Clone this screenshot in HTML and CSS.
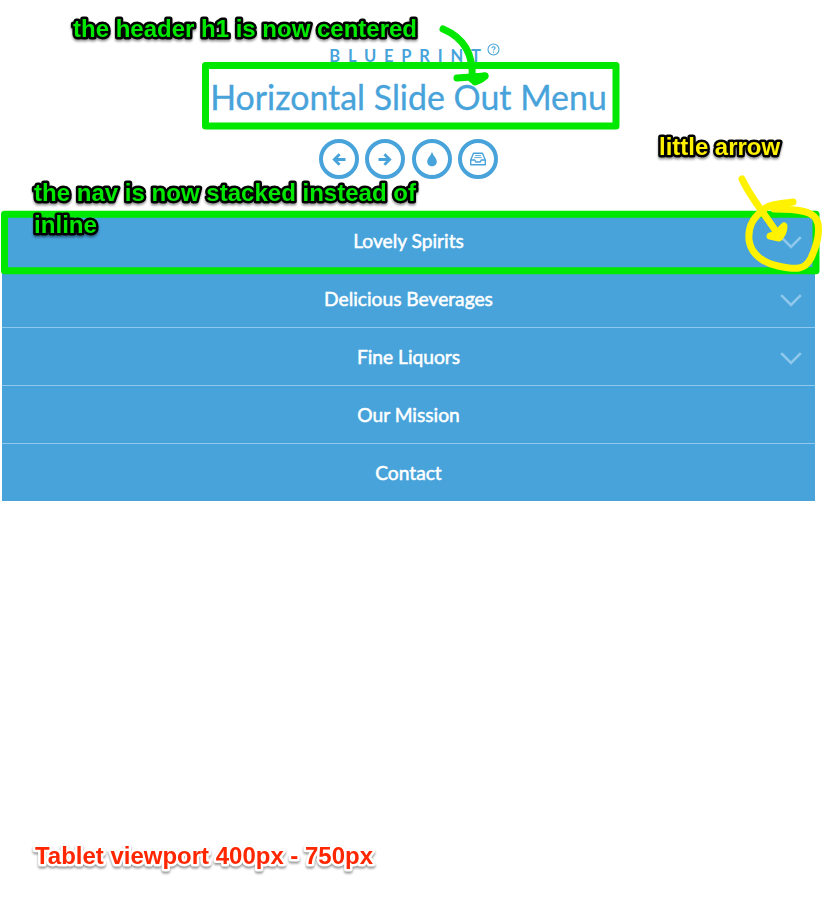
FILE: index.html
```html
<!DOCTYPE html>
<html lang="en">
<head>
<meta charset="utf-8">
<title>Horizontal Slide Out Menu</title>
<link rel="stylesheet" href="styles.css">
</head>
<body>
<div class="page">
  <header class="header">
    <div class="brand"><span class="brand-name">BLUEPRINT</span>
      <svg class="help" viewBox="0 0 13 13"><circle cx="6.5" cy="6.5" r="5.5"/><path d="M4.9 5.2C4.9 3.2 8.1 3.2 8.1 5.1C8.1 6.2 6.5 6.2 6.5 7.6M6.5 8.6V9.8"/></svg>
    </div>
    <h1>Horizontal Slide Out Menu</h1>
    <div class="tools">
      <a class="tool"><svg viewBox="0 0 16 16"><path class="arrow" d="M14.5 8.5H4M8.6 3.2L3.3 8.5L8.6 13.8"/></svg></a>
      <a class="tool"><svg viewBox="0 0 16 16"><path class="arrow" d="M1.5 8.5H12M7.4 3.2L12.7 8.5L7.4 13.8"/></svg></a>
      <a class="tool"><svg viewBox="0 0 16 16"><path class="drop" d="M8 .8C9 4.5 12.8 7.4 12.8 10.7C12.8 13.4 10.7 15.3 8 15.3S3.2 13.4 3.2 10.7C3.2 7.4 7 4.5 8 .8Z"/></svg></a>
      <a class="tool"><svg viewBox="0 0 16 16"><path class="tray" d="M.7 9.1L3.5 2.3H12.5L15.3 9.1V13.7H.7ZM.9 9H4.8L5.7 11H10.3L11.2 9H15.1"/><path class="lines" d="M5 4.6H11M4.3 6.6H11.7"/></svg></a>
    </div>
  </header>
  <nav class="menu">
    <a class="item">Lovely Spirits<svg class="chevron" viewBox="0 0 22 13"><path d="M1.2 1.2L11 11L20.8 1.2"/></svg></a>
    <a class="item">Delicious Beverages<svg class="chevron" viewBox="0 0 22 13"><path d="M1.2 1.2L11 11L20.8 1.2"/></svg></a>
    <a class="item">Fine Liquors<svg class="chevron" viewBox="0 0 22 13"><path d="M1.2 1.2L11 11L20.8 1.2"/></svg></a>
    <a class="item">Our Mission</a>
    <a class="item">Contact</a>
  </nav>
</div>
<svg class="notes" width="824" height="900" viewBox="0 0 824 900">
  <g class="pen green">
    <rect x="205.5" y="65.5" width="410.5" height="60.5"/>
    <rect x="4.5" y="214.3" width="811.5" height="56.5"/>
    <path d="M443 29C462 37 474 52 472 79M457 78L485 76"/>
    <path class="head" d="M471 78L485 76C482 80 478 81 475 82Z"/>
  </g>
  <g class="pen yellow">
    <path d="M742 179C750 197 765 214 779 236"/>
    <path class="head" d="M770 236L776 234L784 226C784 231 782 235 779 238Z"/>
    <path d="M793 202C779 204 769 204 763 210C752 219 748 227 749 240C751 254 763 263 778 266C796 270 805 270 811 258C816 247 820 234 818 224C816 211 799 209 774 209"/>
  </g>
  <g class="label lime">
    <text x="73" y="37" textLength="344" lengthAdjust="spacingAndGlyphs">the header h1 is now centered</text>
    <text x="34" y="201" textLength="382" lengthAdjust="spacingAndGlyphs">the nav is now stacked instead of</text>
    <text x="34" y="233" textLength="63" lengthAdjust="spacingAndGlyphs">inline</text>
  </g>
  <g class="label lemon"><text x="659" y="155" textLength="121" lengthAdjust="spacingAndGlyphs">little arrow</text></g>
  <g class="label red"><text x="35" y="864" textLength="338" lengthAdjust="spacingAndGlyphs">Tablet viewport 400px - 750px</text></g>
</svg>
</body>
</html>
```
FILE: styles.css
```css
* { box-sizing: border-box; }
body {
  margin: 0;
  background: #fff;
  color: #47a3da;
  font-family: Lato, "Liberation Sans", sans-serif;
  height: 900px;
  overflow: hidden;
}
.page { width: 813px; margin-left: 2px; }
.header {
  height: 212px;
  padding-top: 43px;
  display: flex;
  flex-direction: column;
  align-items: center;
}
.brand {
  display: flex;
  height: 27px;
  margin-left: 12px;
}
.brand-name {
  font-size: 16.5px;
  font-weight: 700;
  line-height: 26px;
  letter-spacing: 7.8px;
}
.help { width: 13px; height: 13px; margin-left: -2px; }
.help * { fill: none; stroke: #47a3da; stroke-width: 1.1; }
h1 {
  margin: 4px 0 0;
  font-size: 33.9px;
  font-weight: 400;
  line-height: 46px;
  white-space: nowrap;
  -webkit-text-stroke: .3px #47a3da;
}
.tools { display: flex; gap: 6.4px; margin-top: 19px; }
.tool {
  width: 40px;
  height: 40px;
  border: 4px solid #47a3da;
  border-radius: 50%;
  display: flex;
  align-items: center;
  justify-content: center;
}
.tool svg { width: 16px; height: 16px; }
.arrow { fill: none; stroke: #47a3da; stroke-width: 2.8; }
.drop { fill: #47a3da; }
.tray { fill: none; stroke: #47a3da; stroke-width: 1.4; stroke-linejoin: round; }
.lines { fill: none; stroke: #47a3da; stroke-width: .9; }
.menu { background: #47a3da; color: #fff; }
.item {
  position: relative;
  display: flex;
  align-items: center;
  justify-content: center;
  height: 58px;
  border-bottom: 1px solid #8fc8ec;
  font-size: 19.2px;
  font-weight: 400;
  -webkit-text-stroke: .5px #fff;
}
.item:last-child { height: 57px; border-bottom: 0; }
.chevron {
  position: absolute;
  right: 13px;
  top: 23.5px;
  width: 22px;
  height: 13px;
  fill: none;
  stroke: #8fc8ec;
  stroke-width: 2.6;
}
.notes { position: absolute; left: 0; top: 0; }
.pen { fill: none; stroke-width: 7; stroke-linecap: round; stroke-linejoin: round; }
.green { stroke: #00e800; }
.yellow { stroke: #fff200; }
.green .head { fill: #00e800; }
.yellow .head { fill: #fff200; }
.label {
  font-family: "Liberation Sans", Arial, sans-serif;
  font-size: 24px;
  font-weight: 700;
  paint-order: stroke;
  stroke: #000;
  stroke-width: 5px;
  stroke-linejoin: round;
  filter: drop-shadow(0 2px 1px rgba(0, 0, 0, .4));
}
.lime { fill: #00e800; }
.lemon { fill: #fff200; }
.red { fill: #ff2600; stroke: #fff; }
```
